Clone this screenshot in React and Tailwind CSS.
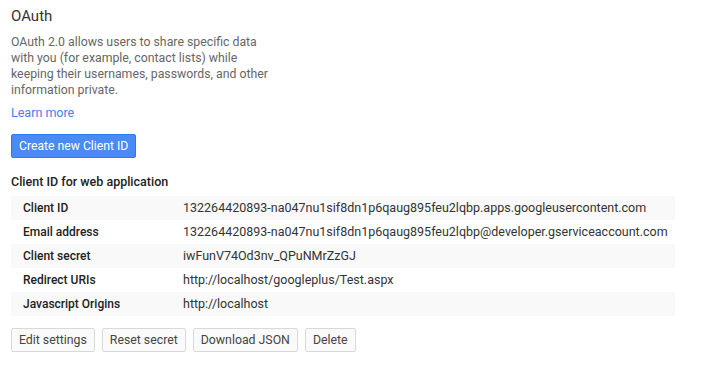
import React from 'react';

const rows = [
  ['Client ID', '132264420893-na047nu1sif8dn1p6qaug895feu2lqbp.apps.googleusercontent.com'],
  ['Email address', '132264420893-na047nu1sif8dn1p6qaug895feu2lqbp@developer.gserviceaccount.com'],
  ['Client secret', 'iwFunV74Od3nv_QPuNMrZzGJ'],
  ['Redirect URIs', 'http://localhost/googleplus/Test.aspx'],
  ['Javascript Origins', 'http://localhost'],
];

const App = () => {
  return (
    <div className="min-h-screen bg-white px-[11px] pt-[6px] font-['Roboto',sans-serif] text-[#333]">
      {/* Heading */}
      <h2 className="text-[15px] leading-[20px] text-[#333]">OAuth</h2>
      <p className="mt-[8px] w-[270px] text-[12.3px] leading-[16px] text-[#666]">
        OAuth 2.0 allows users to share specific data with you (for example, contact lists) while
        keeping their usernames, passwords, and other information private.
      </p>
      <a href="#" className="mt-[7px] block text-[12.5px] leading-[16px] text-[#427fed]">
        Learn more
      </a>
      <button className="mt-[13px] h-[24px] rounded-[2px] border border-[#3079ed] bg-[#4a8af4] px-[7px] text-[12.2px] leading-[20px] text-white">
        Create new Client ID
      </button>

      {/* Client section */}
      <h3 className="mt-[16px] text-[12.5px] font-medium leading-[16px] text-[#222]">
        Client ID for web application
      </h3>
      <div className="mt-[6px] w-[664px]">
        {rows.map(([label, value], i) => (
          <div
            key={label}
            className={`flex h-[24px] items-center ${i % 2 === 0 ? 'bg-[#f9f9f9]' : 'bg-white'}`}
          >
            <div className="w-[172px] pl-[12px] text-[12px] font-medium text-[#222]">{label}</div>
            <div className="text-[12.5px] whitespace-nowrap text-[#333]">{value}</div>
          </div>
        ))}
      </div>

      <div className="mt-[12px] flex gap-[7px]">
        {['Edit settings', 'Reset secret', 'Download JSON', 'Delete'].map((b) => (
          <button
            key={b}
            className="h-[24px] rounded-[2px] border border-[#d9d9d9] bg-[#fafafa] px-[7px] text-[12.3px] leading-[20px] text-[#444]"
          >
            {b}
          </button>
        ))}
      </div>
    </div>
  );
};

export default App;
